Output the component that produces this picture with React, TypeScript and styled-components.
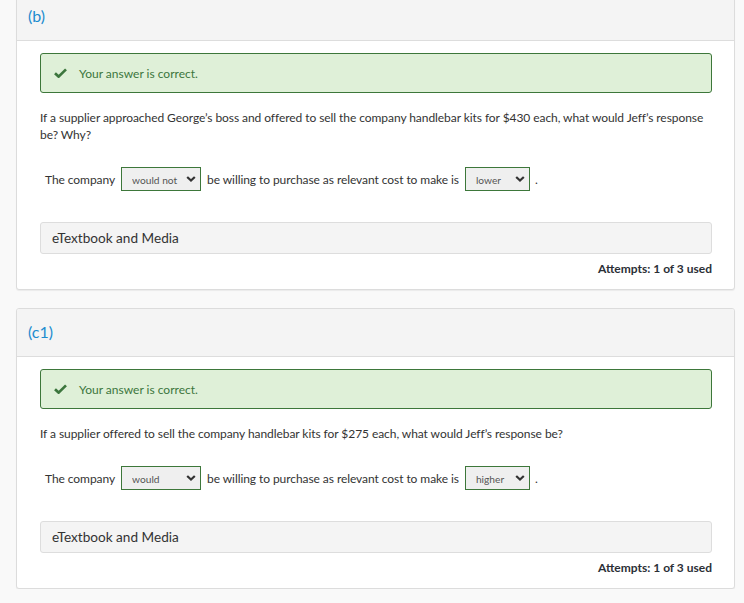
import React from "react";
import styled, { createGlobalStyle } from "styled-components";

const Global = createGlobalStyle`
  html, body { margin: 0; padding: 0; background: #f9f9f9; }
  body { font-family: Lato, "Open Sans", "Liberation Sans", sans-serif; color: #333; }
  * { box-sizing: border-box; }
`;

const Page = styled.div`
  display: flex;
  flex-direction: column;
  gap: 18px;
  padding: 0 9px 0 16px;
  margin-top: -8px;
`;

const Card = styled.section`
  background: #fff;
  border: 1px solid #dcdcdc;
  border-radius: 3px;
  box-shadow: 0 1px 1px rgba(0, 0, 0, 0.06);
  overflow: hidden;
`;

const CardHeader = styled.header`
  height: 48px;
  background: #f4f4f4;
  border-bottom: 1px solid #dddddd;
  display: flex;
  align-items: center;
  padding-left: 11px;
  padding-bottom: 2px;
  font-size: 16px;
  color: #1d8ccf;
`;

const CardBody = styled.div`
  padding: 12px 22px 12px 23px;
  display: flex;
  flex-direction: column;
`;

const Alert = styled.div`
  height: 40px;
  background: #dff0d8;
  border: 1px solid #3d773a;
  border-radius: 3px;
  display: flex;
  align-items: center;
  padding-left: 13px;
  gap: 12px;
  color: #3c763d;
  font-size: 12px;
`;

const Question = styled.p`
  margin: 16px 0 0 0;
  font-size: 12px;
  line-height: 17px;
  letter-spacing: -0.065px;
  color: #333;
`;

const AnswerRow = styled.div`
  margin-top: 24px;
  padding-left: 5px;
  display: flex;
  align-items: center;
  gap: 6px;
  font-size: 12px;
  letter-spacing: -0.07px;
  color: #333;
  height: 24px;
`;

const SelectWrap = styled.span<{ $w: number }>`
  position: relative;
  display: inline-flex;
  width: ${(p) => p.$w}px;
  height: 24px;
`;

const Select = styled.select`
  appearance: none;
  -webkit-appearance: none;
  width: 100%;
  height: 100%;
  border: 1px solid #3d773a;
  border-radius: 0;
  background: #efefef;
  font-family: Lato, "Open Sans", "Liberation Sans", sans-serif;
  font-size: 10.2px;
  color: #555;
  padding: 2px 0 0 10px;
  outline: none;
`;

const Chevron = styled.svg`
  position: absolute;
  right: 5px;
  top: 8px;
  width: 10px;
  height: 8px;
  pointer-events: none;
`;

const Period = styled.span`
  margin-left: -1px;
`;

const Media = styled.div`
  margin-top: 31px;
  height: 32px;
  background: #f4f4f4;
  border: 1px solid #dddddd;
  border-radius: 3px;
  display: flex;
  align-items: center;
  padding-left: 11px;
  font-size: 13.6px;
  color: #333;
`;

const Attempts = styled.div`
  margin-top: 6px;
  text-align: right;
  font-size: 12px;
  line-height: 17px;
  font-weight: 700;
  color: #2b2f36;
`;

const Check = () => (
  <svg width="13" height="10" viewBox="0 0 13 10">
    <path d="M1 5.2 L4.6 8.6 L12 1.4" fill="none" stroke="#3c763d" strokeWidth="2.7" />
  </svg>
);

const Dropdown = ({ value, width }: { value: string; width: number }) => (
  <SelectWrap $w={width}>
    <Select defaultValue={value}>
      <option value={value}>{value}</option>
    </Select>
    <Chevron viewBox="0 0 10 8">
      <path d="M1.2 2 L5 5.6 L8.8 2" fill="none" stroke="#333" strokeWidth="2.2" />
    </Chevron>
  </SelectWrap>
);

type Part = {
  label: string;
  question: string;
  first: string;
  second: string;
};

const parts: Part[] = [
  {
    label: "(b)",
    question:
      "If a supplier approached George\u2019s boss and offered to sell the company handlebar kits for $430 each, what would Jeff\u2019s response be? Why?",
    first: "would not",
    second: "lower",
  },
  {
    label: "(c1)",
    question:
      "If a supplier offered to sell the company handlebar kits for $275 each, what would Jeff\u2019s response be?",
    first: "would",
    second: "higher",
  },
];

export default function App() {
  return (
    <>
      <Global />
      <Page>
        {parts.map((p) => (
          <Card key={p.label}>
            <CardHeader>{p.label}</CardHeader>
            <CardBody>
              <Alert>
                <Check />
                <span>Your answer is correct.</span>
              </Alert>
              <Question>{p.question}</Question>
              <AnswerRow>
                <span>The company</span>
                <Dropdown value={p.first} width={80} />
                <span>be willing to purchase as relevant cost to make is</span>
                <Dropdown value={p.second} width={65} />
                <Period>.</Period>
              </AnswerRow>
              <Media>eTextbook and Media</Media>
              <Attempts>Attempts: 1 of 3 used</Attempts>
            </CardBody>
          </Card>
        ))}
      </Page>
    </>
  );
}
